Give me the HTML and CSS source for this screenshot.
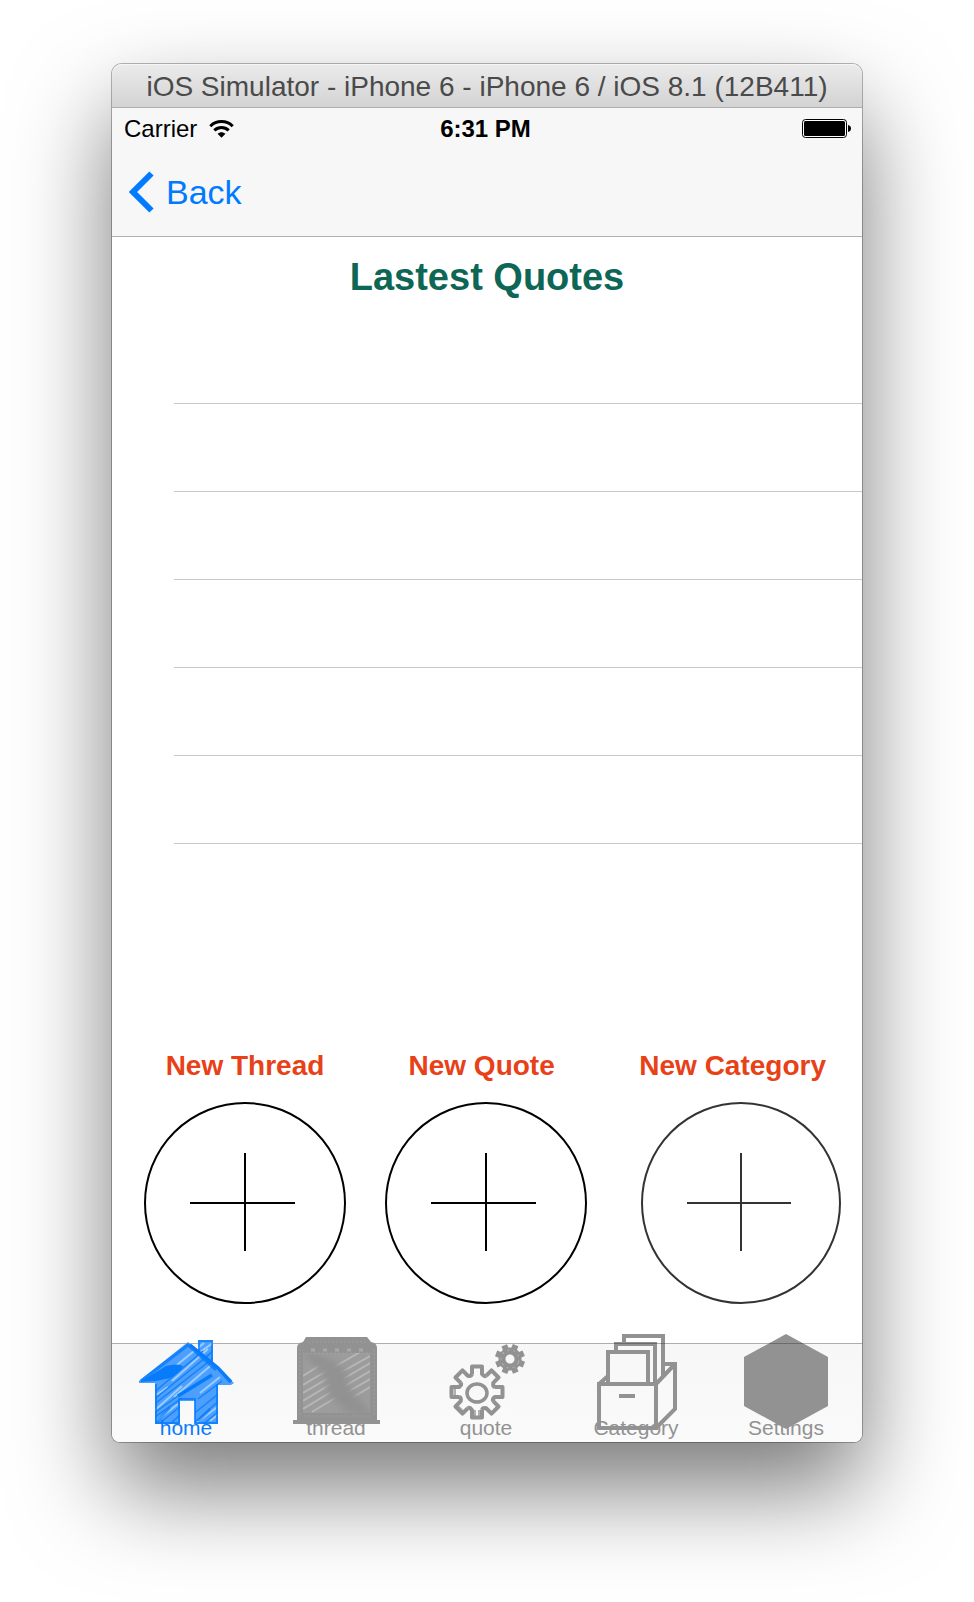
FILE: index.html
```
<!DOCTYPE html>
<html lang="en">
<head>
<meta charset="utf-8">
<title>iOS Simulator</title>
<link rel="stylesheet" href="styles.css">
</head>
<body>
<div class="window">
  <header class="titlebar">iOS Simulator - iPhone 6 - iPhone 6 / iOS 8.1 (12B411)</header>
  <div class="top">
    <div class="status">
      <div class="carrier">Carrier
        <svg width="25" height="18" viewBox="0 0 25 18" aria-hidden="true">
          <g fill="none" stroke="#000" stroke-width="3"><path d="M1.3 6.2C7.5 0 17.5 0 23.7 6.2"/><path d="M5.3 10.3C9.5 6.4 15.5 6.4 19.7 10.3"/></g>
          <path d="M8.500 13.700C11 11.600 14 11.600 16.500 13.700L12.500 17.800Z"/>
        </svg>
      </div>
      <time class="clock">6:31 PM</time>
      <svg class="battery" width="49" height="19" viewBox="0 0 49 19" aria-hidden="true">
        <rect x=".5" y=".5" width="44" height="18" rx="3" fill="#fff" stroke="#000"/>
        <rect x="2" y="2" width="41" height="15" rx="1.500"/>
        <path d="M46 6C50 6.500 50 12.500 46 13Z"/>
      </svg>
    </div>
    <nav class="nav">
      <a class="back" href="#">
        <svg width="25" height="42" viewBox="0 0 25 42" aria-hidden="true"><path d="M22.500 2.500L4 21L22.500 39.500" fill="none" stroke="#007aff" stroke-width="6"/></svg>
        <span>Back</span>
      </a>
    </nav>
  </div>
  <main class="content">
    <h1 class="heading">Lastest Quotes</h1>
    <ul class="rows"><li></li><li></li><li></li><li></li><li></li><li></li></ul>
    <div class="actions">
      <button class="action" type="button"><span>New Thread</span>
        <svg width="202" height="202" viewBox="0 0 202 202" aria-hidden="true"><circle cx="101" cy="101" r="100"/><path d="M46 101H151M101 51V149"/></svg>
      </button>
      <button class="action action-quote" type="button"><span>New Quote</span>
        <svg width="202" height="202" viewBox="0 0 202 202" aria-hidden="true"><circle cx="101" cy="101" r="100"/><path d="M46 101H151M101 51V149"/></svg>
      </button>
      <button class="action action-category" type="button"><span>New Category</span>
        <svg width="200" height="202" viewBox="0 0 200 202" aria-hidden="true"><ellipse cx="100" cy="101" rx="99" ry="100"/><path d="M46 101H150M100 51V149"/></svg>
      </button>
    </div>
  </main>
  <nav class="tabs">
    <a class="tab tab-active" href="#">
      <svg viewBox="0 0 150 102" aria-hidden="true">
        <defs>
          <clipPath id="house"><path d="M76 9L86 17V7H101V31L122 50L119 52H106V91H83V68H68V91H43V50H27V48Z"/></clipPath>
        </defs>
        <g clip-path="url(#house)">
          <rect width="150" height="102" fill="#4c9ffc"/>
          <path d="M50 44L92 10M60 48L96 16M42 78L70 53M44 88L66 71M62 64L104 28M88 60L108 44M84 90L108 72M87 20L102 9M98 88L110 78M44 62L56 54" stroke="#9accff" stroke-width="2"/>
          <path d="M40 61L91 18M40 68L98 21M40 73L104 23M42 80L70 60M40 86L70 65M48 90L70 72M58 91L70 80M80 82L110 58M82 90L110 65M90 92L110 76M86 66L110 48M90 27L102 17" stroke="#1582fb" stroke-width="1.500"/>
          <path d="M28 49L54 33Q66 30 71 33Q67 41 58 45L44 48Z" fill="#087bfb"/>
          <path d="M66 63L100 42" stroke="#087bfb" stroke-width="3.500"/>
          <path d="M44 90L58 74M86 88L98 76" stroke="#087bfb" stroke-width="3" opacity=".6"/>
        </g>
        <g fill="none" stroke="#087bfb"><path d="M29 48L76 12L104 37" stroke-width="3" opacity=".8"/><path d="M78 12L106 35L119 49" stroke-width="3.500"/><path d="M44 51V90H67V66H83V90H105V51" stroke-width="2" opacity=".8"/><path d="M87 20V8H100V31" stroke-width="2" opacity=".7"/></g>
      </svg>
      <span>home</span>
    </a>
    <a class="tab" href="#">
      <svg viewBox="0 0 150 102" aria-hidden="true">
        <defs>
          <clipPath id="panel"><rect x="41" y="20" width="67" height="60"/></clipPath>
          <filter id="soft" x="-20%" y="-20%" width="140%" height="140%"><feGaussianBlur stdDeviation="3"/></filter>
        </defs>
        <path d="M41 9L44 4H105L109 9Q115 10 115 15V87H118V91H31V87H35V15Q35 10 41 9Z" fill="#929292"/>
        <g clip-path="url(#panel)">
          <rect x="41" y="20" width="67" height="60" fill="#9c9c9c"/>
          <path d="M41 43L60 31M41 52L66 37M41 60L70 43M41 68L72 49M41 76L74 56M50 79L78 62M72 34L100 18M76 41L110 22M76 49L110 29M78 56L110 37M82 61L110 45M88 66L110 53" stroke="#b6b6b6" stroke-width="2"/>
          <path d="M38 18L62 23L84 36L86 52L112 84L86 80L66 62L62 42Z" fill="#929292" filter="url(#soft)"/>
        </g>
        <g fill="none" stroke="#a8a8a8"><path d="M49 17H105" stroke-width="3" stroke-dasharray="4 8"/><path d="M46 9H106M38 16V84M112 16V84M42 83H108M40 20H109" stroke-dasharray="2 2" opacity=".6"/></g>
      </svg>
      <span>thread</span>
    </a>
    <a class="tab" href="#">
      <svg viewBox="0 0 150 102" aria-hidden="true">
        <defs>
          <path id="tooth" d="M-5-18V-25.500H5V-18Q7-15 9.200-16.300"/>
        </defs>
        <g transform="translate(65 59)" fill="none" stroke="#929292" stroke-width="4" stroke-linejoin="round">
          <use href="#tooth"/><use href="#tooth" transform="rotate(45)"/><use href="#tooth" transform="rotate(90)"/><use href="#tooth" transform="rotate(135)"/><use href="#tooth" transform="rotate(180)"/><use href="#tooth" transform="rotate(225)"/><use href="#tooth" transform="rotate(270)"/><use href="#tooth" transform="rotate(315)"/>
          <ellipse cy="1" rx="10" ry="9" stroke-width="3.500"/>
          <path d="M-22-4V4M-19 14L-14 19M-2 18V24M2 18V24" stroke-width="2" opacity=".7"/>
        </g>
        <g transform="translate(98 26) rotate(22)" fill="none" stroke="#929292">
          <circle r="8" stroke-width="7"/>
          <path d="M0-9V-15M0 9V15M9 0H15M-9 0H-15M6.500-6.500L10.500-10.500M6.500 6.500L10.500 10.500M-6.500-6.500L-10.500-10.500M-6.500 6.500L-10.500 10.500" stroke-width="6"/>
          <circle r="9" stroke="#b5b5b5" stroke-width="1" stroke-dasharray="2 4"/>
        </g>
      </svg>
      <span>quote</span>
    </a>
    <a class="tab" href="#">
      <svg viewBox="0 0 150 102" aria-hidden="true">
        <g fill="none" stroke="#929292" stroke-width="4">
          <path d="M37 51H94V95H37ZM46 51V19H86V51M54 19V11H93V51M62 11V3H101V43M103 31H113V76L94 95M94 51L113 31M37 51L46 43M57 63H73"/>
        </g>
        <path d="M60 10.500H64M99 10.500H103M52 10.500H95" stroke="#6b6b6b"/>
      </svg>
      <span>Category</span>
    </a>
    <a class="tab" href="#">
      <svg viewBox="0 0 150 102" aria-hidden="true">
        <path d="M74 1L116 24V73L74 96L32 73V24Z" fill="#929292"/>
        <path d="M57 10.500H91" stroke="#6b6b6b"/>
      </svg>
      <span>Settings</span>
    </a>
  </nav>
</div>
</body>
</html>
```
FILE: styles.css
```
* { box-sizing: border-box; }
body {
  margin: 0;
  padding: 64px 112px 160px;
  background: #fff;
  font-family: "Liberation Sans", Arial, Helvetica, sans-serif;
  color: #000;
}
.window {
  border-radius: 10px 10px 8px 8px;
  background: #fff;
  box-shadow: 0 0 0 1px rgba(0, 0, 0, .28), 0 46px 96px rgba(0, 0, 0, .53);
}
.titlebar {
  height: 44px;
  padding-top: 1px;
  line-height: 44px;
  border-radius: 10px 10px 0 0;
  border-bottom: 1px solid #adadad;
  background: linear-gradient(#ebebeb, #d3d3d3);
  box-shadow: inset 0 1px #f5f5f5;
  color: #4a4a4a;
  font-size: 28px;
  text-align: center;
  white-space: nowrap;
}
.top {
  background: #f7f7f7;
  border-bottom: 1px solid #b0b0b0;
}
.status {
  display: grid;
  grid-template-columns: 1fr auto 1fr;
  align-items: center;
  height: 40px;
  padding: 1px 11px 0 12px;
  font-size: 24px;
}
.carrier { display: flex; align-items: center; gap: 12px; }
.clock { padding-right: 4px; font-weight: bold; }
.battery { justify-self: end; }
.nav { display: flex; align-items: center; height: 88px; padding: 0 17px; }
.back {
  display: flex;
  align-items: center;
  gap: 12px;
  color: #007aff;
  font-size: 34px;
  text-decoration: none;
}
.content { padding-bottom: 39px; }
.heading {
  margin: 0;
  padding: 19px 0 17px;
  color: #0e6655;
  font-size: 38px;
  line-height: 43px;
  text-align: center;
}
.rows { margin: 0; padding: 0 0 0 62px; list-style: none; }
.rows li { height: 88px; border-bottom: 1px solid #c8c7cc; }
.actions {
  display: flex;
  justify-content: space-between;
  padding: 206px 20px 0 32px;
}
.action {
  display: flex;
  flex-direction: column;
  align-items: center;
  gap: 20px;
  padding: 0;
  border: 0;
  background: none;
  color: #e84118;
  font: bold 28px/32px "Liberation Sans", Arial, Helvetica, sans-serif;
  white-space: nowrap;
}
.action svg { fill: none; stroke: #000; stroke-width: 2; }
.action-quote span { padding-right: 8px; }
.action-category { margin-left: 14px; }
.action-category span { padding-right: 16px; }
.action-category svg { stroke: #333; }
.tabs {
  display: flex;
  border-top: 1px solid #adadad;
  border-radius: 0 0 8px 8px;
  background: linear-gradient(#f7f7f7, #fafafa);
}
.tab {
  flex: 1;
  display: flex;
  flex-direction: column;
  align-items: center;
  padding-bottom: 2px;
  color: #929292;
  font-size: 21px;
  line-height: 24px;
  text-decoration: none;
}
.tab svg { width: 150px; height: 102px; margin: -11px 0 -19px; }
.tab span { padding-right: 2px; }
.tab-active { color: #087bfb; }
```
